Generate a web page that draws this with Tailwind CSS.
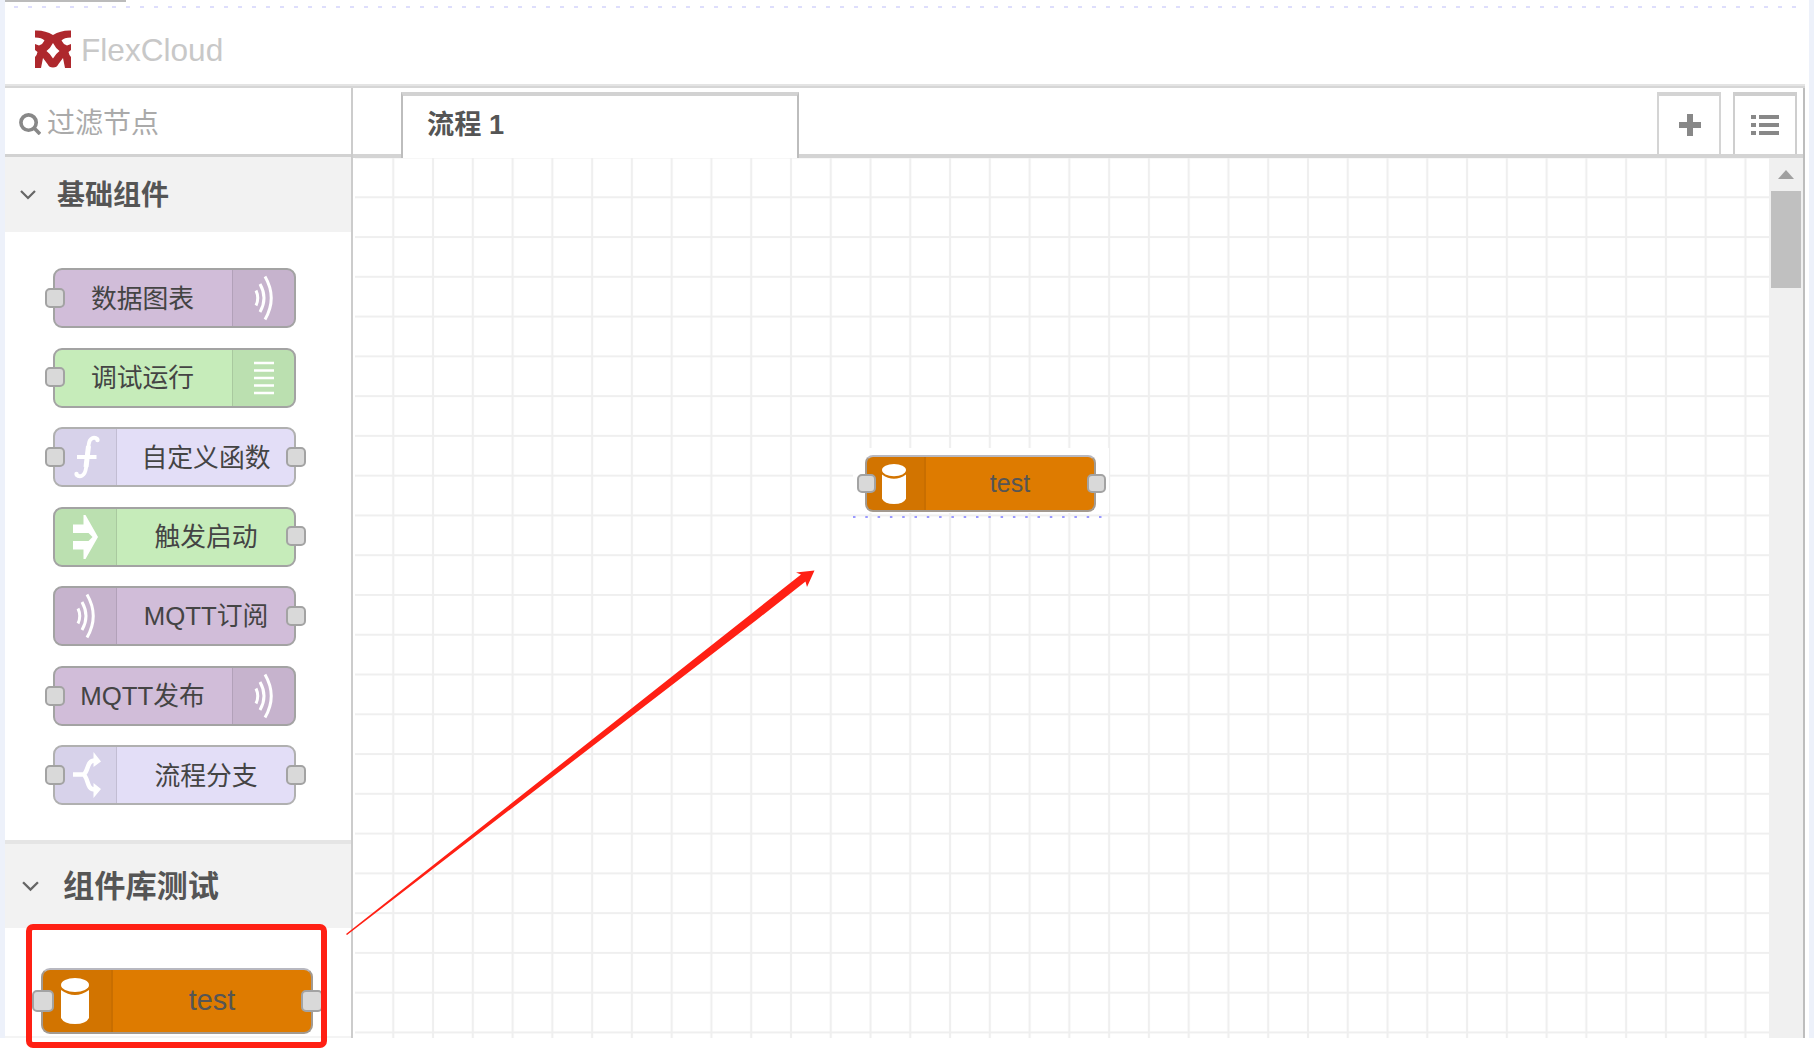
<!DOCTYPE html>
<html lang="zh-CN">
<head>
<meta charset="utf-8">
<title>FlexCloud</title>
<script src="https://cdn.jsdelivr.net/npm/@tailwindcss/browser@4"></script>
</head>
<body class="relative h-[1049px] w-[1814px] overflow-hidden bg-white font-['Liberation_Sans','Noto_Sans_CJK_SC',sans-serif] text-[#555]">
<svg class="hidden">
  <symbol id="wave" viewBox="0 0 20 46"><g fill="none" stroke="#fff" stroke-width="3"><path d="M2 15.500Q5.500 23 2 30.500"/><path d="M6 9Q14 23 6 37"/><path d="M11 1.500Q23.500 23 11 44.500"/></g></symbol>
  <symbol id="bars" viewBox="0 0 20 34"><path d="M0 2h20M0 9.500h20M0 17h20M0 24.500h20M0 32h20" stroke="#fff" stroke-width="2.400"/></symbol>
  <symbol id="func" viewBox="0 0 26 44"><path d="M24 4.500C20 1 15.500 3 14.800 9L12 33C11 41 6 43 2 39.500M3 22H22.500" fill="none" stroke="#fff" stroke-width="3.800"/><path d="M14.500 11L12 32" stroke="#fff" stroke-width="5"/><circle cx="23.500" cy="5" r="2.200" fill="#fff"/><circle cx="2.500" cy="39" r="2.200" fill="#fff"/></symbol>
  <symbol id="inject" viewBox="0 0 25 44"><path d="M0 9.500h10.500V0h2L25 22 12.500 44h-2V34.500H0V26h15.500L19.500 22 15.500 18H0z" fill="#fff"/></symbol>
  <symbol id="switch" viewBox="0 0 28 46"><path d="M0 22.500H10.500M10 23C16 20 13 8.500 22 8.500M10 22C16 26 13 37.500 22 37.500" fill="none" stroke="#fff" stroke-width="4.500"/><path d="M20.500 0l7.500 9.500-7.500 5.500zM20.500 31l7.500 6-7.500 9z" fill="#fff"/></symbol>
  <symbol id="db" viewBox="0 0 28 46"><path d="M0 12Q14 22 28 12V40Q25 46 14 46T0 40z" fill="#fff"/><ellipse cx="14" cy="7" rx="14" ry="7" fill="#fff"/></symbol>
</svg>

<div class="flex h-[1038px] border-x-[5px] border-[#edf1fa]">
 <div class="flex w-full flex-col">
  <header class="flex h-[84px] shrink-0 flex-col">
    <div class="h-0.5 w-[121px] bg-[#bbb]"></div>
    <svg class="mt-1 h-0.5 w-full"><line x1="9" y1="1" x2="1800" y2="1" stroke="#dedefc" stroke-width="2" stroke-dasharray="4 10"/></svg>
    <div class="flex items-start pt-[22px] pl-[30px]">
      <svg class="h-[38px] w-9" viewBox="0 0 36 38" fill="#ae282d"><path fill-rule="evenodd" d="M0 .5Q10 0 18 5Q26 0 36 .5V7.500Q29 7.500 26.500 10.500Q28 14 32 15.500L36 14V20L33.500 22Q34 25 36 27V38H30L28 28L23.500 34Q22 37.500 18 37.500Q14 37.500 12.500 34L8 28L6 38H0V27Q2 25 2.500 22L0 20V14L4 15.500Q8 14 9.500 10.500Q7 7.500 0 7.500ZM18 13Q15.500 18 11.500 21Q15.500 24 18 28.500Q20.500 24 24.500 21Q20.500 18 18 13Z"/></svg>
      <span class="ml-[10px] pt-px text-[31.600px] leading-[38px] text-[#c8c8c8]">FlexCloud</span>
    </div>
  </header>
  <div class="h-1 w-[1800px] shrink-0 border-t-2 border-b-2 border-t-[#e4e4e4] border-b-[#d6d6d6]"></div>
  <div class="flex w-[1800px] grow border-r-2 border-[#bdbdbd]">
   <aside class="flex w-[348px] shrink-0 flex-col border-r-2 border-[#ccc]">
    <div class="flex h-[69px] shrink-0 items-center border-b-[3px] border-[#d2d2d2] pl-3.5">
      <svg class="mt-[5px] size-[22px]" viewBox="0 0 23 23" fill="none" stroke="#888" stroke-width="3.800"><circle cx="10" cy="10" r="8"/><path d="M15.500 15.500L22 22"/></svg>
      <span class="ml-[6px] pt-[5px] text-[28px] leading-none text-[#aaa]">过滤节点</span>
    </div>
    <div class="flex h-[75px] shrink-0 items-center bg-[#f2f2f2] pl-[15px]">
      <svg class="h-2.5 w-4" viewBox="0 0 16 10" fill="none" stroke="#666" stroke-width="2.200"><path d="M1 1l7 7 7-7"/></svg>
      <span class="ml-[21px] pt-0.5 text-[28px] leading-none font-bold">基础组件</span>
    </div>

    <div class="flex h-[608px] shrink-0 flex-col gap-[19.500px] pt-9 pl-[48px] text-[25.800px] leading-none text-[#444]">
      <div class="relative flex h-[60px] w-[243px] shrink-0 rounded-[9px] border-2 border-[#a3a3a3] bg-[#d1bdd9]">
        <span class="flex flex-1 items-center justify-center pt-[3px] pr-0.5">数据图表</span>
        <span class="flex w-[62px] items-center justify-center rounded-r-[6px] border-l border-black/10 bg-black/5 pl-px"><svg class="h-[46px] w-5"><use href="#wave"/></svg></span>
        <i class="absolute top-[18px] -left-[10px] size-5 rounded-[5px] border-2 border-[#a3a3a3] bg-[#d9d9d9]"></i>
      </div>
      <div class="relative flex h-[60px] w-[243px] shrink-0 rounded-[9px] border-2 border-[#a3a3a3] bg-[#c6ecba]">
        <span class="flex flex-1 items-center justify-center pt-[3px] pr-0.5">调试运行</span>
        <span class="flex w-[62px] items-center justify-center rounded-r-[6px] border-l border-black/10 bg-black/5 pl-px"><svg class="h-[34px] w-5"><use href="#bars"/></svg></span>
        <i class="absolute top-[17px] -left-[10px] size-5 rounded-[5px] border-2 border-[#a3a3a3] bg-[#d9d9d9]"></i>
      </div>
      <div class="relative flex h-[60px] w-[243px] shrink-0 rounded-[9px] border-2 border-[#b0b0b0] bg-[#e3def7]">
        <span class="flex w-[62px] items-center justify-center rounded-l-[6px] border-r border-black/10 bg-black/5 pl-0.5"><svg class="h-[44px] w-[26px]"><use href="#func"/></svg></span>
        <span class="flex flex-1 items-center justify-center pt-[3px] pl-px">自定义函数</span>
        <i class="absolute top-[18px] -left-[10px] size-5 rounded-[5px] border-2 border-[#a3a3a3] bg-[#d9d9d9]"></i>
        <i class="absolute top-[18px] -right-[12px] size-5 rounded-[5px] border-2 border-[#a3a3a3] bg-[#d9d9d9]"></i>
      </div>
      <div class="relative flex h-[60px] w-[243px] shrink-0 rounded-[9px] border-2 border-[#a3a3a3] bg-[#c6ecba]">
        <span class="flex w-[62px] items-center justify-center rounded-l-[6px] border-r border-black/10 bg-black/5"><svg class="h-[44px] w-[25px]"><use href="#inject"/></svg></span>
        <span class="flex flex-1 items-center justify-center pt-0.5 pl-px">触发启动</span>
        <i class="absolute top-[17px] -right-[12px] size-5 rounded-[5px] border-2 border-[#a3a3a3] bg-[#d9d9d9]"></i>
      </div>
      <div class="relative flex h-[60px] w-[243px] shrink-0 rounded-[9px] border-2 border-[#a3a3a3] bg-[#d1bdd9]">
        <span class="flex w-[62px] items-center justify-center rounded-l-[6px] border-r border-black/10 bg-black/5"><svg class="h-[46px] w-5"><use href="#wave"/></svg></span>
        <span class="flex flex-1 items-center justify-center pt-0.5 pl-px">MQTT订阅</span>
        <i class="absolute top-[18px] -right-[12px] size-5 rounded-[5px] border-2 border-[#a3a3a3] bg-[#d9d9d9]"></i>
      </div>
      <div class="relative flex h-[60px] w-[243px] shrink-0 rounded-[9px] border-2 border-[#a3a3a3] bg-[#d1bdd9]">
        <span class="flex flex-1 items-center justify-center pt-0.5 pr-0.5">MQTT发布</span>
        <span class="flex w-[62px] items-center justify-center rounded-r-[6px] border-l border-black/10 bg-black/5 pl-px"><svg class="h-[46px] w-5"><use href="#wave"/></svg></span>
        <i class="absolute top-[18px] -left-[10px] size-5 rounded-[5px] border-2 border-[#a3a3a3] bg-[#d9d9d9]"></i>
      </div>
      <div class="relative flex h-[60px] w-[243px] shrink-0 rounded-[9px] border-2 border-[#b0b0b0] bg-[#e3def7]">
        <span class="flex w-[62px] items-center justify-center rounded-l-[6px] border-r border-black/10 bg-black/5 pl-0.5"><svg class="h-[46px] w-7"><use href="#switch"/></svg></span>
        <span class="flex flex-1 items-center justify-center pt-[3px] pl-px">流程分支</span>
        <i class="absolute top-[18px] -left-[10px] size-5 rounded-[5px] border-2 border-[#a3a3a3] bg-[#d9d9d9]"></i>
        <i class="absolute top-[18px] -right-[12px] size-5 rounded-[5px] border-2 border-[#a3a3a3] bg-[#d9d9d9]"></i>
      </div>
    </div>

    <div class="flex h-[88px] shrink-0 items-center border-t-4 border-[#e5e5e5] bg-[#f2f2f2] pl-[17px]">
      <svg class="h-[11px] w-[17px]" viewBox="0 0 16 10" fill="none" stroke="#666" stroke-width="2.200"><path d="M1 1l7 7 7-7"/></svg>
      <span class="ml-[24px] pt-px text-[31.200px] leading-none font-bold">组件库测试</span>
    </div>
    <div class="grow border-b-2 border-[#f4f4f4] pt-10 pl-9">
      <div class="relative flex h-[66px] w-[272px] rounded-[9px] border-2 border-[#a39a90] border-t-[#b8b8c0] bg-[#de7b00]">
        <span class="flex w-[70px] items-center rounded-l-[7px] border-r-2 border-black/5 bg-black/5 pl-[18px]"><svg class="h-[46px] w-7"><use href="#db"/></svg></span>
        <span class="flex flex-1 items-center justify-center pb-0.5 text-[28.800px] leading-none">test</span>
        <i class="absolute top-[20px] -left-[11px] size-[22px] rounded-[5px] border-2 border-[#a3a3a3] bg-[#d9d9d9]"></i>
        <i class="absolute top-[20px] -right-[12px] size-[22px] rounded-[5px] border-2 border-[#a3a3a3] bg-[#d9d9d9]"></i>
      </div>
    </div>
   </aside>

   <main class="flex grow flex-col">
    <nav class="flex h-[70px] shrink-0">
      <div class="w-[48px] border-b-4 border-[#d4d4d4]"></div>
      <div class="mt-1 flex w-[398px] items-center border-x-2 border-t-4 border-x-[#bdbdbd] border-t-[#d2d2d2] pb-[5px] pl-6 text-[27.200px] leading-none font-bold">流程 1</div>
      <div class="flex grow justify-end gap-3 border-b-4 border-[#d4d4d4] pt-1 pr-[6px]">
        <div class="flex w-[64px] items-center justify-center border-x-2 border-t-4 border-[#d4d4d4] pl-px"><svg class="size-[22px]"><path d="M11 0v22M0 11h22" stroke="#888" stroke-width="6"/></svg></div>
        <div class="flex w-[64px] items-center justify-center border-x-2 border-t-4 border-[#cecece]"><svg class="h-[22px] w-7" stroke="#888" stroke-width="4"><path d="M0 3h5M0 11h5M0 19h5M8 3h20M8 11h20M8 19h20"/></svg></div>
      </div>
    </nav>
    <div class="flex min-h-0 grow">
      <div class="relative ml-0.5 grow overflow-hidden">
        <svg class="block size-full">
          <defs><pattern id="grid" x="-1.500" y="-.5" width="39.770" height="39.770" patternUnits="userSpaceOnUse"><path d="M0 39.770V0M39.770 0V39.770M0 0H39.770M0 39.770H39.770" stroke="#efefef" stroke-width="2.200"/></pattern></defs>
          <rect width="100%" height="100%" fill="url(#grid)"/>
        </svg>
        <div class="absolute top-[290px] left-[498px] h-[65px] w-[256px] bg-white"></div>
        <svg class="absolute top-[358px] left-[498px] h-0.5 w-[252px]"><path d="M0 1H252" stroke="#9a9aff" stroke-width="2" stroke-dasharray="2.500 9.800"/></svg>
        <div class="absolute top-[297px] left-[510px] flex h-[57px] w-[231px] rounded-[8px] border-2 border-[#a39a90] border-t-[#b8b8c0] bg-[#de7b00]">
          <span class="flex w-[59px] items-center rounded-l-[6px] border-r-2 border-black/5 bg-black/5 pl-[15px]"><svg class="h-10 w-6" viewBox="0 0 28 46" preserveAspectRatio="none"><use href="#db"/></svg></span>
          <span class="flex flex-1 items-center justify-center pb-px text-[25px] leading-none">test</span>
          <i class="absolute top-[16.500px] -left-[10px] size-[19px] rounded-[5px] border-2 border-[#a3a3a3] bg-[#d9d9d9]"></i>
          <i class="absolute top-[16.500px] -right-[12px] size-[19px] rounded-[5px] border-2 border-[#a3a3a3] bg-[#d9d9d9]"></i>
        </div>
      </div>
      <div class="flex w-[34px] flex-col items-center bg-[#f0f0f0] pt-3">
        <svg class="h-[9px] w-4"><path d="M8 0l8 9H0z" fill="#a0a0a0"/></svg>
        <div class="mt-[12px] h-[97px] w-[30px] bg-[#c0c0c0]"></div>
      </div>
    </div>
   </main>
  </div>
 </div>
</div>

<div class="absolute top-[924px] left-[26px] h-[124px] w-[301px] rounded-[7px] border-[6px] border-[#ff2014]"></div>
<svg class="absolute top-0 left-0 h-[1049px] w-[1814px]"><path d="M346 934L743.500 620L801 574.500L796 572.500L814.500 570.500L807 587L805.500 581.500L756.500 620L347 935z" fill="#ff2014"/></svg>
</body>
</html>
